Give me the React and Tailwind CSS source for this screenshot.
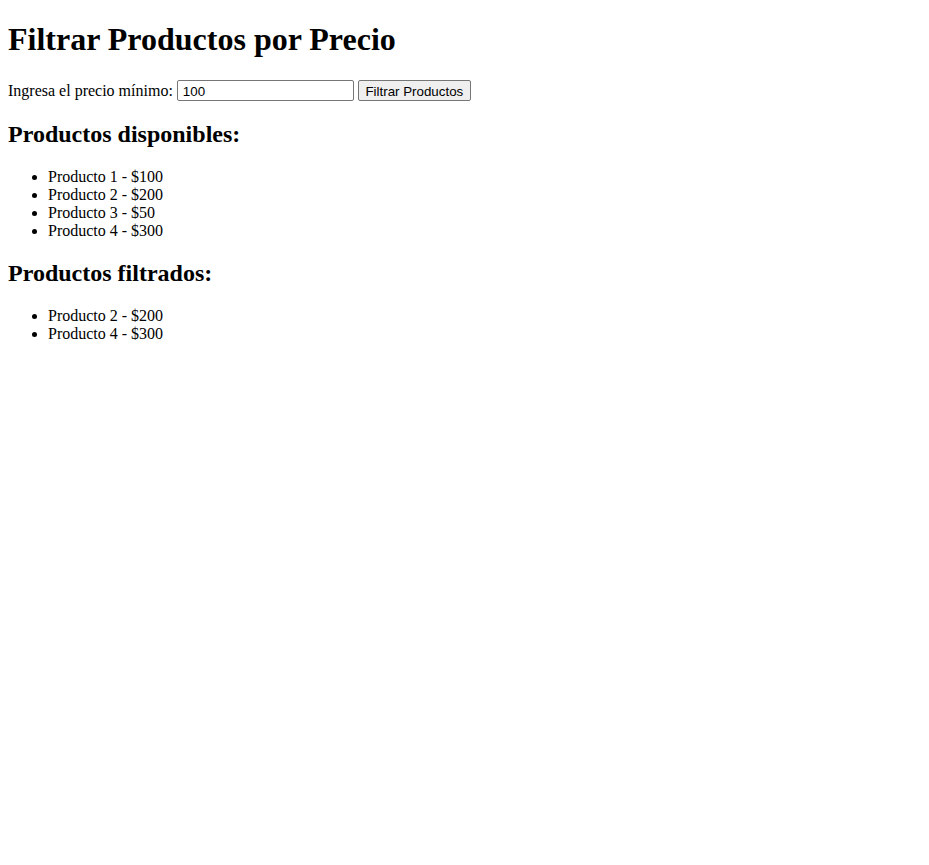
export default function App() {
  const all = [
    { n: "Producto 1", p: 100 },
    { n: "Producto 2", p: 200 },
    { n: "Producto 3", p: 50 },
    { n: "Producto 4", p: 300 },
  ];
  const filtered = all.filter((x) => x.p > 100);
  return (
    <div className="px-2 pb-2 font-['Liberation_Serif',serif] text-base leading-[normal] text-black bg-white min-h-[865px]">
      <h1 className="text-[32px] font-bold my-[21.44px] pt-0">Filtrar Productos por Precio</h1>
      <p className="my-4">
        <label>Ingresa el precio mínimo: </label>
        <input
          type="number"
          defaultValue="100"
          className="w-[177px] h-[21px] border border-[#767676] rounded-[2px] pl-[5px] pr-[2px] pt-[2px] pb-0 text-[13.33px] font-['Liberation_Sans',sans-serif] align-baseline outline-none [appearance:textfield]"
        />{" "}
        <button className="h-[21px] w-[113px] px-[6px] pt-[2px] pb-0 border border-[#767676] rounded-[2px] bg-[#efefef] text-[13.33px] font-['Liberation_Sans',sans-serif] text-black align-baseline">
          Filtrar Productos
        </button>
      </p>
      <h2 className="text-[24px] font-bold my-[19.92px]">Productos disponibles:</h2>
      <ul className="list-disc pl-10 my-4">
        {all.map((x) => (
          <li key={x.n}>
            {x.n} - ${x.p}
          </li>
        ))}
      </ul>
      <h2 className="text-[24px] font-bold my-[19.92px]">Productos filtrados:</h2>
      <ul className="list-disc pl-10 my-4">
        {filtered.map((x) => (
          <li key={x.n}>
            {x.n} - ${x.p}
          </li>
        ))}
      </ul>
    </div>
  );
}
